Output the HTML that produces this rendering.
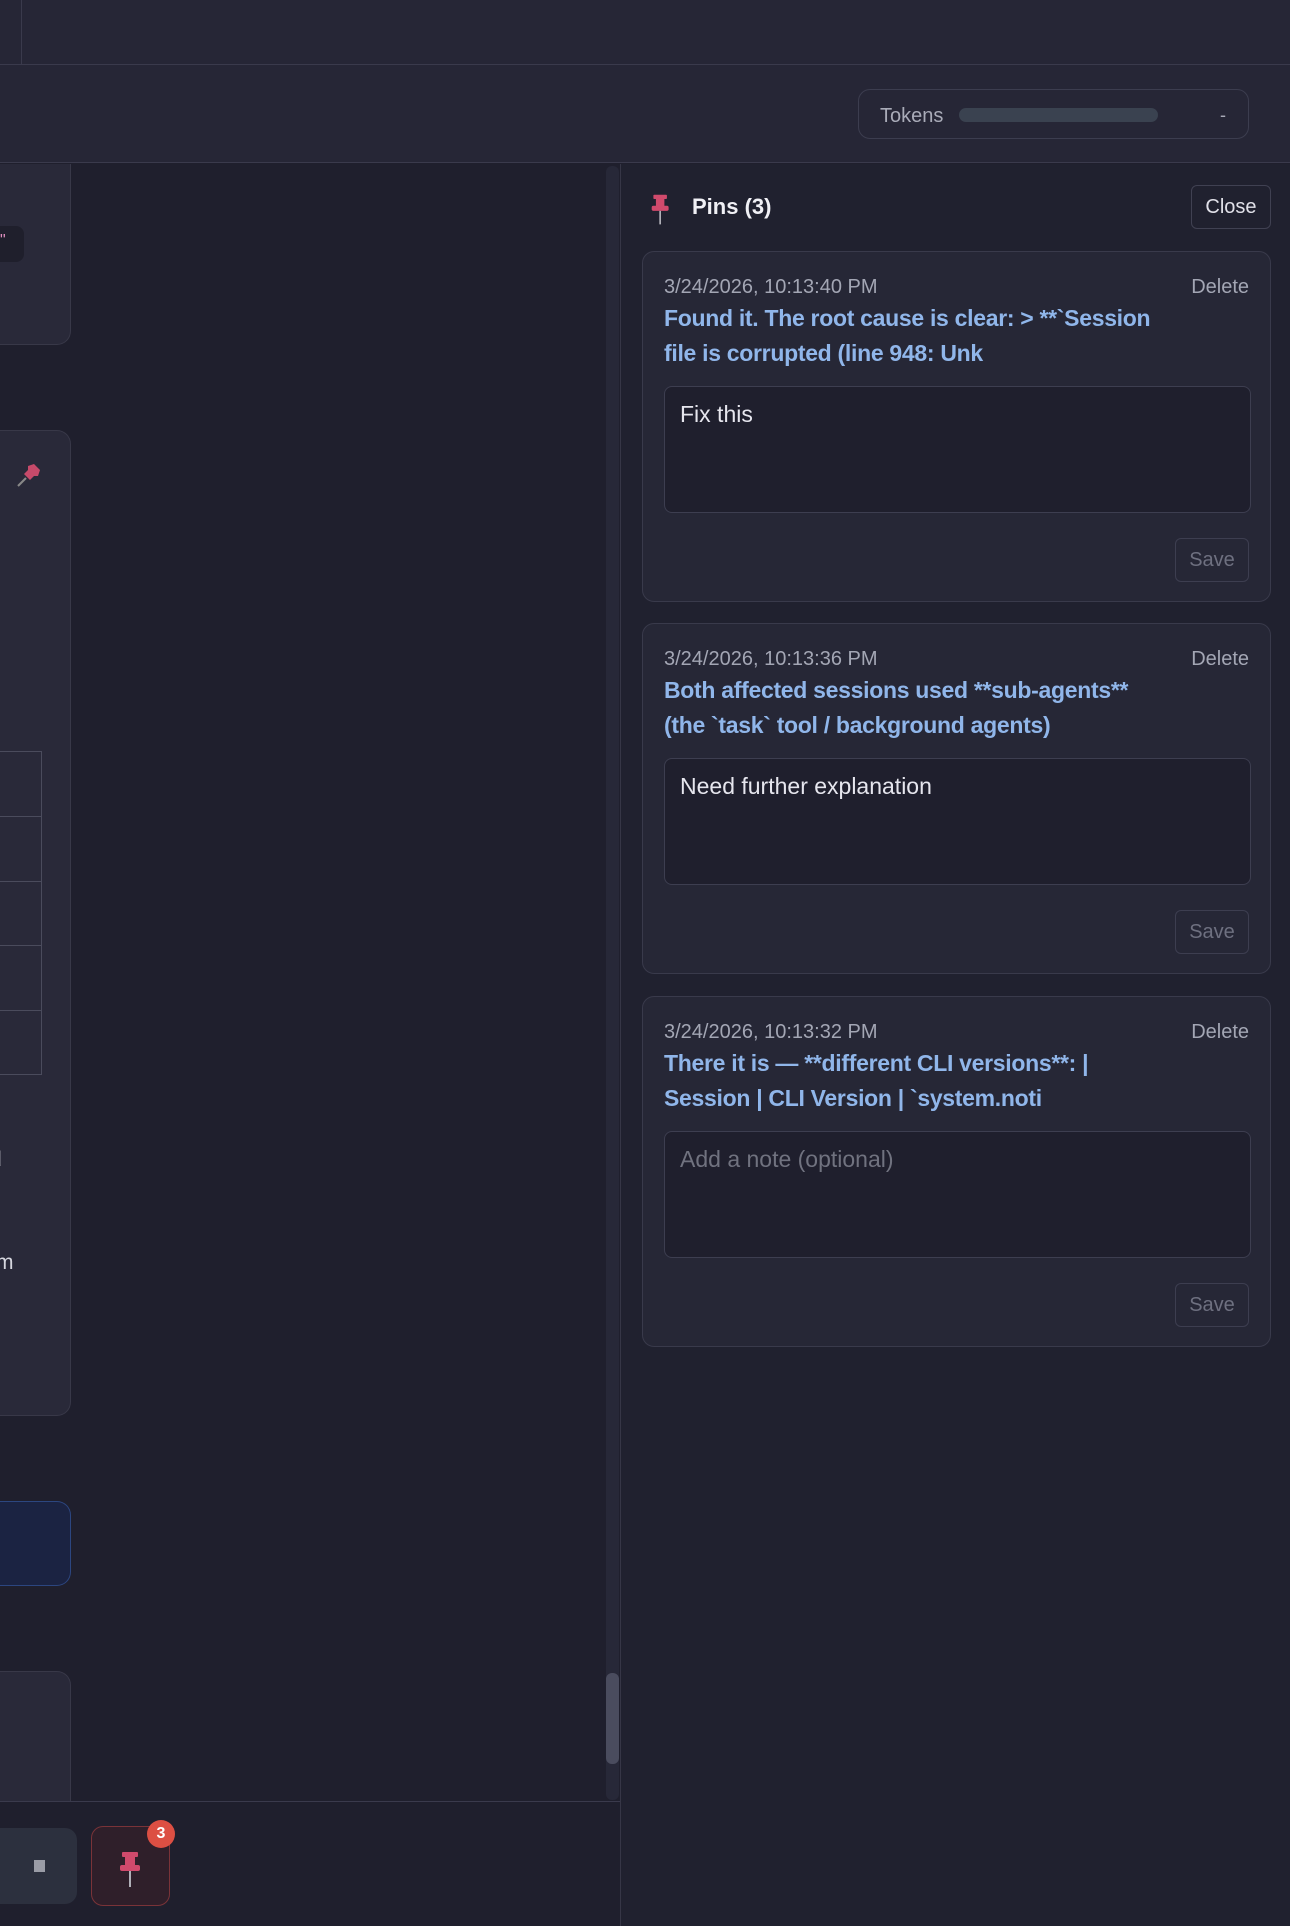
<!DOCTYPE html>
<html><head><meta charset="utf-8"><style>
*{box-sizing:border-box;margin:0;padding:0}
body{width:1290px;height:1926px;background:#1f1f2d;font-family:"Liberation Sans",sans-serif;position:relative;overflow:hidden}
.abs{position:absolute}
.top{left:0;top:0;width:1290px;height:65px;background:#262636;border-bottom:1px solid #3a3a4c}
.hdr{left:0;top:65px;width:1290px;height:98px;background:#262636;border-bottom:1px solid #3a3a4c}
.lcard{background:#292939;border:1px solid #383848;border-radius:0 14px 14px 0;border-left:none}
.rp{left:620px;top:164px;width:670px;height:1762px;background:#20212f;border-left:1px solid #363646}
.card{position:absolute;left:21px;width:629px;height:351px;background:#262736;border:1px solid #393a4b;border-radius:12px}
.ts{position:absolute;left:21px;top:24px;font-size:20px;color:#a3a6b4}
.del{position:absolute;right:21px;top:24px;font-size:20px;color:#a3a6b4}
.tt{position:absolute;left:21px;top:49px;font-size:23px;font-weight:bold;color:#90b6ea;line-height:35px;white-space:nowrap;letter-spacing:-0.3px}
.ta{position:absolute;left:21px;top:134px;width:587px;height:127px;background:#1f1f2d;border:1px solid #3d3e50;border-radius:8px;padding:14px 15px;font-size:23px;color:#e6e6ee}
.ta.ph{color:#70727f}
.sv{position:absolute;right:21px;top:286px;width:74px;height:44px;border:1px solid #3d3e50;border-radius:6px;font-size:20px;color:#6e7080;text-align:center;line-height:42px}
</style></head><body>
<div class="abs top"></div>
<div class="abs" style="left:21px;top:0;width:1px;height:64px;background:#3a3a4c"></div>
<div class="abs hdr"></div>
<div class="abs" style="left:858px;top:89px;width:391px;height:50px;border:1px solid #3c3d4f;border-radius:12px"></div>
<div class="abs" style="left:880px;top:105px;font-size:20px;color:#a9abb8">Tokens</div>
<div class="abs" style="left:959px;top:108px;width:199px;height:14px;background:#3a4250;border-radius:7px"></div>
<div class="abs" style="left:1220px;top:105px;font-size:18px;color:#a9abb8">-</div>

<div class="abs lcard" style="left:0;top:164px;width:71px;height:181px;border-top:none;border-radius:0 0 14px 0"></div>
<div class="abs" style="left:0;top:226px;width:24px;height:36px;background:#1f1f2c;border-radius:0 8px 8px 0;color:#e08fc0;font-size:16px;padding:6px 0 0 0">"</div>
<div class="abs lcard" style="left:0;top:430px;width:71px;height:986px"></div>
<svg class="abs" style="left:14px;top:460px" width="30" height="30" viewBox="0 0 30 30"><line x1="4" y1="26" x2="12" y2="18" stroke="#888" stroke-width="2"/><path d="M10 14 L16 20 L20 16 L24 16 L26 10 L20 4 L14 6 L14 10 Z" fill="#c64a6a"/></svg>
<div class="abs" style="left:0;top:751px;width:42px;height:324px;border:1px solid #4a4b5c;border-left:none"></div>
<div class="abs" style="left:0;top:816px;width:41px;height:1px;background:#4a4b5c"></div>
<div class="abs" style="left:0;top:881px;width:41px;height:1px;background:#4a4b5c"></div>
<div class="abs" style="left:0;top:945px;width:41px;height:1px;background:#4a4b5c"></div>
<div class="abs" style="left:0;top:1010px;width:41px;height:1px;background:#4a4b5c"></div>
<div class="abs" style="left:-10px;top:1148px;font-size:21px;color:#d5d6de">d</div>
<div class="abs" style="left:-4px;top:1251px;font-size:21px;color:#d5d6de">m</div>
<div class="abs" style="left:0;top:1501px;width:71px;height:85px;background:#1b2342;border:1px solid #2c4680;border-left:none;border-radius:0 14px 14px 0"></div>
<div class="abs lcard" style="left:0;top:1671px;width:71px;height:131px;border-bottom:none;border-radius:0 14px 0 0"></div>
<div class="abs" style="left:606px;top:166px;width:13px;height:1634px;background:#272838;border-radius:6px"></div>
<div class="abs" style="left:606px;top:1673px;width:13px;height:91px;background:#4a4c5e;border-radius:6px"></div>
<div class="abs" style="left:0;top:1801px;width:620px;height:1px;background:#3a3a4c"></div>
<div class="abs" style="left:0;top:1828px;width:77px;height:76px;background:#2c303e;border-radius:0 12px 12px 0"></div>
<div class="abs" style="left:34px;top:1860px;width:11px;height:12px;background:#9a9ca6"></div>
<div class="abs" style="left:91px;top:1826px;width:79px;height:80px;background:#2f1f2a;border:1.5px solid #7a3338;border-radius:12px"></div>
<svg class="abs" style="left:118px;top:1852px" width="26" height="36" viewBox="0 0 26 36"><rect x="4" y="0" width="16" height="5" rx="1" fill="#d04a6c"/><rect x="7" y="4" width="10" height="10" fill="#d04a6c"/><rect x="2" y="13" width="20" height="6" rx="2" fill="#d04a6c"/><rect x="11" y="19" width="2" height="16" fill="#b0b0b8"/></svg>
<div class="abs" style="left:147px;top:1820px;width:28px;height:28px;border-radius:50%;background:#dc4f43;color:#fff;font-size:16px;font-weight:bold;text-align:center;line-height:28px">3</div>

<div class="abs rp">
<svg class="abs" style="left:29px;top:28px" width="22" height="36" viewBox="0 0 26 36"><rect x="4" y="0" width="16" height="5" rx="1" fill="#d04a6c"/><rect x="7" y="4" width="10" height="10" fill="#d04a6c"/><rect x="2" y="13" width="20" height="6" rx="2" fill="#d04a6c"/><rect x="11" y="19" width="2" height="16" fill="#b0b0b8"/></svg>
<div class="abs" style="left:71px;top:30px;font-size:22px;font-weight:bold;color:#f0f0f5">Pins (3)</div>
<div class="abs" style="left:570px;top:21px;width:80px;height:44px;border:1px solid #404152;border-radius:6px;font-size:20px;color:#e0e0e8;text-align:center;line-height:42px">Close</div>

<div class="card" style="top:87px"><div class="ts">3/24/2026, 10:13:40 PM</div><div class="del">Delete</div>
<div class="tt">Found it. The root cause is clear: &gt; **`Session<br>file is corrupted (line 948: Unk</div>
<div class="ta">Fix this</div><div class="sv">Save</div></div>

<div class="card" style="top:459px"><div class="ts">3/24/2026, 10:13:36 PM</div><div class="del">Delete</div>
<div class="tt">Both affected sessions used **sub-agents**<br>(the `task` tool / background agents)</div>
<div class="ta">Need further explanation</div><div class="sv">Save</div></div>

<div class="card" style="top:832px"><div class="ts">3/24/2026, 10:13:32 PM</div><div class="del">Delete</div>
<div class="tt">There it is — **different CLI versions**: |<br>Session | CLI Version | `system.noti</div>
<div class="ta ph">Add a note (optional)</div><div class="sv">Save</div></div>
</div>
</body></html>
